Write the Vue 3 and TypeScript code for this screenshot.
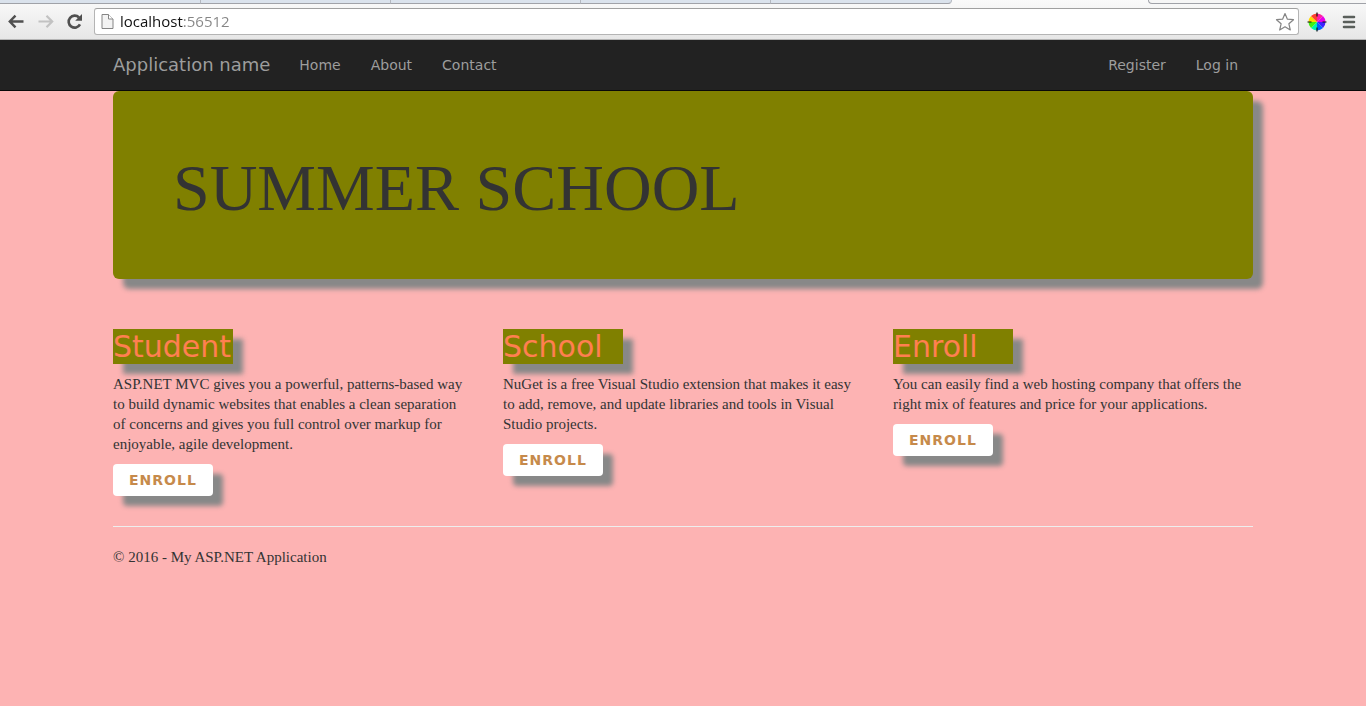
<script setup lang="ts">
import { ref } from 'vue'

interface Feature {
  title: string
  text: string
}

const address = ref('localhost:56512')
const mainLinks: string[] = ['Home', 'About', 'Contact']
const accountLinks: string[] = ['Register', 'Log in']
const features: Feature[] = [
  {
    title: 'Student',
    text: 'ASP.NET MVC gives you a powerful, patterns-based way to build dynamic websites that enables a clean separation of concerns and gives you full control over markup for enjoyable, agile development.',
  },
  {
    title: 'School',
    text: 'NuGet is a free Visual Studio extension that makes it easy to add, remove, and update libraries and tools in Visual Studio projects.',
  },
  {
    title: 'Enroll',
    text: 'You can easily find a web hosting company that offers the right mix of features and price for your applications.',
  },
]
</script>

<template>
  <div class="browser">
    <div class="tabs" aria-hidden="true">
      <span class="tab first"></span>
      <span v-for="n in 4" :key="n" class="tab" :class="{ last: n === 4 }"></span>
      <span class="tab active"></span>
      <span class="tab rest"></span>
    </div>
    <div class="toolbar">
      <button class="tool" type="button" aria-label="Back">
        <svg width="18" height="18" viewBox="0 0 18 18" fill="none" stroke="#505050" stroke-width="2.4">
          <path d="M16.5 8.5H3.5M8.5 2.7L2.8 8.5L8.5 14.3" />
        </svg>
      </button>
      <button class="tool" type="button" aria-label="Forward">
        <svg width="18" height="18" viewBox="0 0 18 18" fill="none" stroke="#c2c2c2" stroke-width="2.2">
          <path d="M2.5 8.5H15.5M10.5 2.7L16.2 8.5L10.5 14.3" />
        </svg>
      </button>
      <button class="tool" type="button" aria-label="Reload">
        <svg width="18" height="18" viewBox="0 0 18 18">
          <path d="M15 11.4A6 6 0 1 1 14 4.5" fill="none" stroke="#505050" stroke-width="2.6" />
          <path d="M17 1V7.8H10.2Z" fill="#505050" />
        </svg>
      </button>
      <div class="omnibox">
        <svg width="13" height="17" viewBox="0 0 13 17" stroke="#858585" stroke-linejoin="round">
          <path d="M1 1.5H7.5L12 6V15.5H1Z" fill="#f3f3f3" />
          <path d="M7.5 1.5V6H12" fill="#fff" />
        </svg>
        <input v-model="address" class="address" type="text" aria-label="Address" spellcheck="false" />
        <button class="star" type="button" aria-label="Bookmark this page">
          <svg width="20" height="20" viewBox="0 0 20 20" fill="#fff" stroke="#858585" stroke-width="1.2" stroke-linejoin="round">
            <path d="M10 1.5L12.4 7.2L18.5 7.7L13.9 11.8L15.3 18L10 14.8L4.7 18L6.1 11.8L1.5 7.7L7.6 7.2Z" />
          </svg>
        </button>
      </div>
      <button class="tool wheel" type="button" aria-label="Colour picker">
        <svg width="20" height="20" viewBox="0 0 20 20">
          <path d="M10 10L4 4A8.5 8.5 0 0 0 1.5 10Z" fill="#ffd800" />
          <path d="M10 10L4 4A8.5 8.5 0 0 1 10 1.5Z" fill="#ff4030" />
          <path d="M10 10L10 1.5A8.5 8.5 0 0 1 16 4Z" fill="#ff20a0" />
          <path d="M10 10L16 4A8.5 8.5 0 0 1 18.5 10Z" fill="#e800e8" />
          <path d="M10 10H18.5A8.5 8.5 0 0 1 16 16Z" fill="#4020ff" />
          <path d="M10 10L16 16A8.5 8.5 0 0 1 10 18.5Z" fill="#0060ff" />
          <path d="M10 10V18.5A8.5 8.5 0 0 1 4 16Z" fill="#00f0b0" />
          <path d="M10 10L4 16A8.5 8.5 0 0 1 1.5 10Z" fill="#40f010" />
          <path d="M10 0.5V4.5M10 15.5V19.5M0.5 10H4.5M15.5 10H19.5" stroke="#111" stroke-width="1.2" />
        </svg>
      </button>
      <button class="tool menu" type="button" aria-label="Menu">
        <svg width="14" height="14" viewBox="0 0 14 14" stroke="#5a5f5b" stroke-width="2.6" stroke-linecap="round">
          <path d="M2 2H12M2 7H12M2 12H12" />
        </svg>
      </button>
    </div>
  </div>

  <nav class="navbar">
    <div class="container bar">
      <a class="brand" href="#">Application name</a>
      <ul class="links">
        <li v-for="link in mainLinks" :key="link"><a href="#">{{ link }}</a></li>
      </ul>
      <ul class="links account">
        <li v-for="link in accountLinks" :key="link"><a href="#">{{ link }}</a></li>
      </ul>
    </div>
  </nav>

  <main class="container">
    <header class="hero">
      <h1>SUMMER SCHOOL</h1>
    </header>
    <div class="features">
      <section v-for="feature in features" :key="feature.title" class="feature">
        <h2>{{ feature.title }}</h2>
        <p>{{ feature.text }}</p>
        <a class="enroll" href="#">ENROLL</a>
      </section>
    </div>
    <footer>
      <p>© 2016 - My ASP.NET Application</p>
    </footer>
  </main>
</template>

<style>
body {
  margin: 0;
  background: #fdb3b3;
}
</style>

<style scoped>
* {
  box-sizing: border-box;
}

.browser {
  background: linear-gradient(#fafafa, #e6e6e6);
  border-bottom: 1px solid #b4b4b4;
}

.tabs {
  display: flex;
  height: 4px;
}

.tab {
  flex: 190 1 0;
  background: #dae2ec;
  border-bottom: 1px solid #a0a2a8;
  border-right: 1px solid #b4b8c0;
}

.tab.first {
  flex-grow: 201;
}

.tab.last {
  flex-grow: 181;
  border-bottom-right-radius: 4px;
}

.tab.active {
  flex-grow: 197;
  background: none;
  border: 0;
}

.tab.rest {
  flex-grow: 218;
  background: #f6f6f6;
  border-left: 1px solid #a0a2a8;
  border-right: 0;
  border-radius: 0 0 0 4px;
}

.toolbar {
  display: flex;
  align-items: center;
  height: 35px;
  padding: 0 8px 0 7px;
}

.tool,
.star {
  display: flex;
  padding: 0;
  border: 0;
  background: none;
}

.tool {
  margin-right: 11px;
}

.omnibox {
  display: flex;
  flex: 1;
  align-items: center;
  height: 27px;
  padding: 0 3px 0 6px;
  background: #fff;
  border: 1px solid #b4b4b4;
  border-top-color: #a0a0a0;
  border-radius: 3px;
}

.address {
  flex: 1;
  min-width: 0;
  margin-left: 6px;
  padding: 0 0 2px;
  border: 0;
  outline: 0;
  font: 15px/22px "Open Sans", "Noto Sans", sans-serif;
  color: #111;
  /* host name dark, port grey */
  background: linear-gradient(90deg, #111 63px, #858585 63px);
  background-clip: text;
  -webkit-text-fill-color: transparent;
}

.wheel {
  margin: 0 15px 0 8px;
}

.menu {
  margin-right: 2px;
}

.container {
  max-width: 1170px;
  margin: 0 auto;
  padding: 0 15px;
}

.navbar {
  background: #222;
  border-bottom: 1px solid #080808;
  font-family: "DejaVu Sans", Verdana, sans-serif;
}

.bar {
  display: flex;
  align-items: center;
  height: 50px;
}

.navbar a {
  color: #9d9d9d;
  text-decoration: none;
}

.brand {
  margin-right: 14px;
  font-size: 18px;
  line-height: 22px;
}

.links {
  display: flex;
  margin: 0;
  padding: 0;
  list-style: none;
}

.links a {
  display: block;
  padding: 15px;
  font-size: 14px;
  line-height: 20px;
}

.account {
  margin-left: auto;
}

.hero {
  padding: 48px 60px;
  margin-bottom: 30px;
  background: #808000;
  border-radius: 6px;
  box-shadow: 10px 10px 5px #888;
}

h1 {
  margin: 18px 0 12px;
  font: 66px/62px "Liberation Serif", Georgia, serif;
  color: #333;
}

.features {
  display: grid;
  grid-template-columns: repeat(3, 1fr);
  gap: 30px;
}

.feature {
  padding-top: 20px;
}

h2 {
  width: 120px;
  margin: 0 0 10px;
  background: #808000;
  box-shadow: 10px 10px 5px #888;
  font: 30px/35px "DejaVu Sans", Verdana, sans-serif;
  color: #ff7f50;
}

p {
  margin: 0 0 10px;
  padding-right: 5px;
  font: 15px/20px "Liberation Serif", Georgia, serif;
  color: #333;
}

.enroll {
  display: inline-block;
  padding: 6px 16px;
  background: #fff;
  border-radius: 4px;
  box-shadow: 10px 10px 5px #888;
  font: bold 14px/20px "DejaVu Sans", Verdana, sans-serif;
  letter-spacing: 1px;
  color: #c68a4b;
  text-decoration: none;
}

footer {
  margin-top: 30px;
  padding-top: 20px;
  border-top: 1px solid #eee;
}
</style>
